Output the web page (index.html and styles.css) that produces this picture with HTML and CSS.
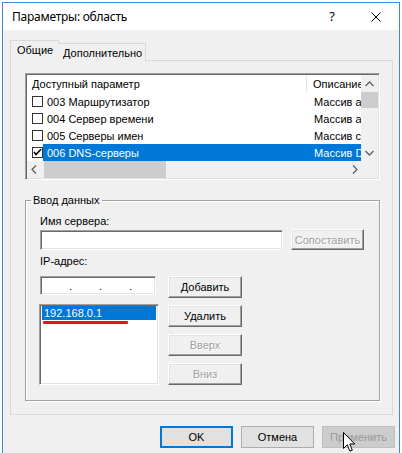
FILE: index.html
```html
<!DOCTYPE html>
<html lang="ru">
<head>
<meta charset="utf-8">
<title>Параметры: область</title>
<link rel="stylesheet" href="styles.css">
</head>
<body>
<div class="window">
  <div class="titlebar">
    <span class="title">Параметры: область</span>
    <span class="cap-btn help">?</span>
    <span class="cap-btn close">
      <svg width="10" height="10" viewBox="0 0 10 10"><path d="M0.5 0.5 L9.5 9.5 M9.5 0.5 L0.5 9.5" stroke="#000" stroke-width="1" fill="none"/></svg>
    </span>
  </div>
  <div class="client">
    <div class="tabs">
      <div class="tab active">Общие</div>
      <div class="tab">Дополнительно</div>
    </div>
    <div class="panel">
      <div class="listview">
        <div class="lv-top">
          <div class="lv-body">
            <div class="lv-header">
              <div class="col1 hcell">Доступный параметр</div>
              <div class="col2 hcell">Описание</div>
            </div>
            <div class="lv-row">
              <span class="cb"></span>
              <div class="sel"><span class="col1 cell">003 Маршрутизатор</span><span class="col2 cell">Массив а</span></div>
            </div>
            <div class="lv-row">
              <span class="cb"></span>
              <div class="sel"><span class="col1 cell">004 Сервер времени</span><span class="col2 cell">Массив а</span></div>
            </div>
            <div class="lv-row">
              <span class="cb"></span>
              <div class="sel"><span class="col1 cell">005 Серверы имен</span><span class="col2 cell">Массив с</span></div>
            </div>
            <div class="lv-row selected">
              <span class="cb checked"><svg width="9" height="9" viewBox="0 0 9 9"><path d="M1 4 L3 6.5 L8 1.2" stroke="#000" stroke-width="1.6" fill="none"/></svg></span>
              <div class="sel"><span class="col1 cell">006 DNS-серверы</span><span class="col2 cell">Массив D</span></div>
            </div>
          </div>
          <div class="vscroll">
            <div class="sb-btn"><svg width="9" height="6" viewBox="0 0 9 6"><path d="M0.5 5 L4.5 1 L8.5 5" stroke="#606060" stroke-width="1.3" fill="none"/></svg></div>
            <div class="vthumb"></div>
            <div class="vtrack"></div>
            <div class="sb-btn"><svg width="9" height="6" viewBox="0 0 9 6"><path d="M0.5 1 L4.5 5 L8.5 1" stroke="#606060" stroke-width="1.3" fill="none"/></svg></div>
          </div>
        </div>
        <div class="hscroll">
          <div class="sb-btn hleft"><svg width="6" height="9" viewBox="0 0 6 9"><path d="M5 0.5 L1 4.5 L5 8.5" stroke="#606060" stroke-width="1.3" fill="none"/></svg></div>
          <div class="hthumb"></div>
          <div class="htrack"></div>
          <div class="sb-btn hright"><svg width="6" height="9" viewBox="0 0 6 9"><path d="M1 0.5 L5 4.5 L1 8.5" stroke="#606060" stroke-width="1.3" fill="none"/></svg></div>
          <div class="corner"></div>
        </div>
      </div>

      <fieldset class="group">
        <legend>Ввод данных</legend>
        <div class="group-inner">
          <div class="label first">Имя сервера:</div>
          <div class="row-name">
            <div class="edit name-edit"></div>
            <div class="cbtn disabled match-btn">Сопоставить</div>
          </div>
          <div class="label">IP-адрес:</div>
          <div class="row-ip">
            <div class="ip-col">
              <div class="edit ip-edit"><span>.</span><span>.</span><span>.</span></div>
              <div class="listbox">
                <div class="lb-item">192.168.0.1</div>
                <div class="redline"></div>
              </div>
            </div>
            <div class="btn-col">
              <div class="cbtn">Добавить</div>
              <div class="cbtn">Удалить</div>
              <div class="cbtn disabled">Вверх</div>
              <div class="cbtn disabled">Вниз</div>
            </div>
          </div>
        </div>
      </fieldset>
    </div>

    <div class="buttons">
      <div class="mbtn default">OK</div>
      <div class="mbtn">Отмена</div>
      <div class="mbtn off">Применить</div>
    </div>
  </div>
  <svg class="cursor" width="13" height="21" viewBox="0 0 13 21"><path d="M0.5 0.5 L0.5 16.5 L4.3 12.8 L6.9 19.2 L9.3 18.2 L6.8 12 L11.8 12 Z" fill="#fff" stroke="#000" stroke-width="1" stroke-linejoin="miter"/></svg>
</div>
</body>
</html>
```

FILE: styles.css
```css
* { box-sizing: border-box; }
html, body { margin: 0; padding: 0; }
body {
  background: #fff;
  font-family: "Liberation Sans", Arial, sans-serif;
  font-size: 11px;
  color: #000;
  height: 453px;
  overflow: hidden;
}
.window {
  margin: 2px 0 0 2px;
  width: 398px;
  height: 451px;
  border: 1px solid #3f8bd3;
  border-bottom: none;
  background: #f0f0f0;
  position: relative;
  overflow: hidden;
}
.titlebar {
  height: 27px;
  background: #fff;
  display: flex;
  align-items: center;
  padding-left: 9px;
}
.title {
  flex: 1;
  font-family: "Noto Sans", "Liberation Sans", sans-serif;
  font-size: 12px;
  letter-spacing: -0.25px;
}
.cap-btn {
  width: 46px;
  height: 27px;
  display: flex;
  align-items: center;
  justify-content: center;
}
.help {
  font-family: "Noto Sans", sans-serif;
  font-size: 13px;
  padding-left: 4px;
  padding-bottom: 2px;
}
.client {
  padding: 10px 6px 0 7px;
}
.tabs {
  display: flex;
  align-items: flex-end;
  height: 21px;
  margin-bottom: -1px;
  position: relative;
  z-index: 1;
}
.tab {
  border: 1px solid #d9d9d9;
  border-bottom: none;
  background: #f0f0f0;
  display: flex;
  align-items: center;
}
.tab.active {
  width: 49px;
  height: 21px;
  padding-left: 6px;
  padding-bottom: 2px;
}
.tab + .tab {
  width: 88px;
  height: 18px;
  margin-left: -1px;
  padding-left: 5px;
  border-left: none;
  background: #f0f0f0;
}
.panel {
  height: 355px;
  border: 1px solid #d9d9d9;
  padding: 12px 0 0 14px;
}
.listview {
  width: 355px;
  height: 107px;
  border-style: solid;
  border-width: 1px;
  border-color: #a0a0a0 #fff #fff #a0a0a0;
  box-shadow: inset 1px 1px 0 #696969, inset -1px -1px 0 #e3e3e3;
  padding: 1px;
  background: #fff;
}
.lv-top { display: flex; height: 86px; }
.lv-body { flex: 1; overflow: hidden; }
.lv-header { display: flex; height: 18px; }
.hcell { display: flex; align-items: center; height: 18px; }
.col1 { width: 280px; flex: none; }
.lv-header .col1 { border-right: 1px solid #e5e5e5; padding-left: 5px; }
.lv-header .col2 { padding-left: 6px; white-space: nowrap; }
.lv-row { display: flex; align-items: center; height: 17px; }
.cb {
  width: 11px; height: 11px;
  margin-left: 5px;
  border: 1px solid #333;
  background: #fff;
  flex: none;
  display: flex; align-items: center; justify-content: center;
}
.sel { flex: 1; display: flex; height: 17px; align-items: center; white-space: nowrap; overflow: hidden; }
.sel .col1 { width: 263px; padding-left: 4px; }
.sel .col2 { padding-left: 8px; }
.selected .sel { background: #0078d7; color: #fff; }
.vscroll {
  width: 17px;
  background: #f0f0f0;
  display: flex; flex-direction: column;
}
.sb-btn { height: 17px; display: flex; align-items: center; justify-content: center; flex: none; }
.vthumb { height: 16px; background: #cdcdcd; flex: none; }
.vtrack { flex: 1; }
.hscroll { display: flex; height: 17px; background: #f0f0f0; }
.hscroll .sb-btn { width: 17px; }
.hleft { justify-content: flex-start; padding-left: 4px; }
.hright { justify-content: flex-end; padding-right: 3px; }
.hthumb { width: 122px; background: #cdcdcd; }
.htrack { flex: 1; }
.corner { width: 17px; background: #f0f0f0; }

.group {
  width: 355px;
  margin: 14px 0 0 0;
  padding: 0 0 15px 0;
  border: 1px solid #a0a0a0;
  box-shadow: 1px 1px 0 #fff, inset 1px 1px 0 #fff;
  min-width: 0;
}
.group legend {
  margin-left: 5px;
  padding: 0 2px;
  line-height: 13px;
  height: 13px;
}
.group-inner { padding-left: 14px; }
.label { height: 13px; line-height: 13px; margin-top: 5px; }
.label.first { margin-top: 8px; }
.row-name { display: flex; margin-top: 2px; gap: 8px; }
.edit {
  background: #fff;
  border-style: solid;
  border-width: 1px;
  border-color: #a0a0a0 #fff #fff #a0a0a0;
  box-shadow: inset 1px 1px 0 #696969, inset -1px -1px 0 #e3e3e3;
}
.name-edit { width: 243px; height: 20px; }
.cbtn {
  width: 74px; height: 22px;
  background: #f0f0f0;
  border-style: solid; border-width: 1px;
  border-color: #fff #696969 #696969 #fff;
  box-shadow: inset -1px -1px 0 #a0a0a0, inset 1px 1px 0 #e3e3e3;
  display: flex; align-items: center; justify-content: center;
  font-size: 11px;
}
.cbtn.disabled { color: #a0a0a0; text-shadow: 1px 1px 0 #fff; }
.match-btn { width: 73px; height: 21px; margin-top: -1px; }
.row-ip { display: flex; margin-top: 8px; gap: 9px; }
.ip-col { width: 119px; }
.ip-edit { width: 116px; height: 19px; display: flex; align-items: center; padding-left: 28px; gap: 27px; }
.ip-edit span { line-height: 10px; }
.listbox {
  margin: 9px 0 0 -1px;
  width: 120px; height: 81px;
  background: #fff;
  border-style: solid; border-width: 1px;
  border-color: #a0a0a0 #fff #fff #a0a0a0;
  box-shadow: inset 1px 1px 0 #696969, inset -1px -1px 0 #e3e3e3;
  padding: 1px 2px;
}
.lb-item {
  background: #0078d7;
  color: #fff;
  height: 14px;
  line-height: 14px;
  padding-left: 2px;
  font-size: 11px;
}
.redline { width: 85px; height: 3px; background: #e8101c; margin: 1px 0 0 1px; border-radius: 1px; }
.btn-col { display: flex; flex-direction: column; gap: 7px; }

.buttons {
  display: flex;
  justify-content: flex-end;
  gap: 8px;
  margin: 11px -2px 0 0;
}
.mbtn {
  width: 73px; height: 22px;
  background: #e1e1e1;
  border: 1px solid #adadad;
  display: flex; align-items: center; justify-content: center;
  font-size: 11px;
}
.mbtn.default { border: 2px solid #0078d7; }
.mbtn.off { background: #cccccc; border-color: #bfbfbf; color: #9a9a9a; }
.cursor { position: absolute; left: 340px; top: 429px; }
```
